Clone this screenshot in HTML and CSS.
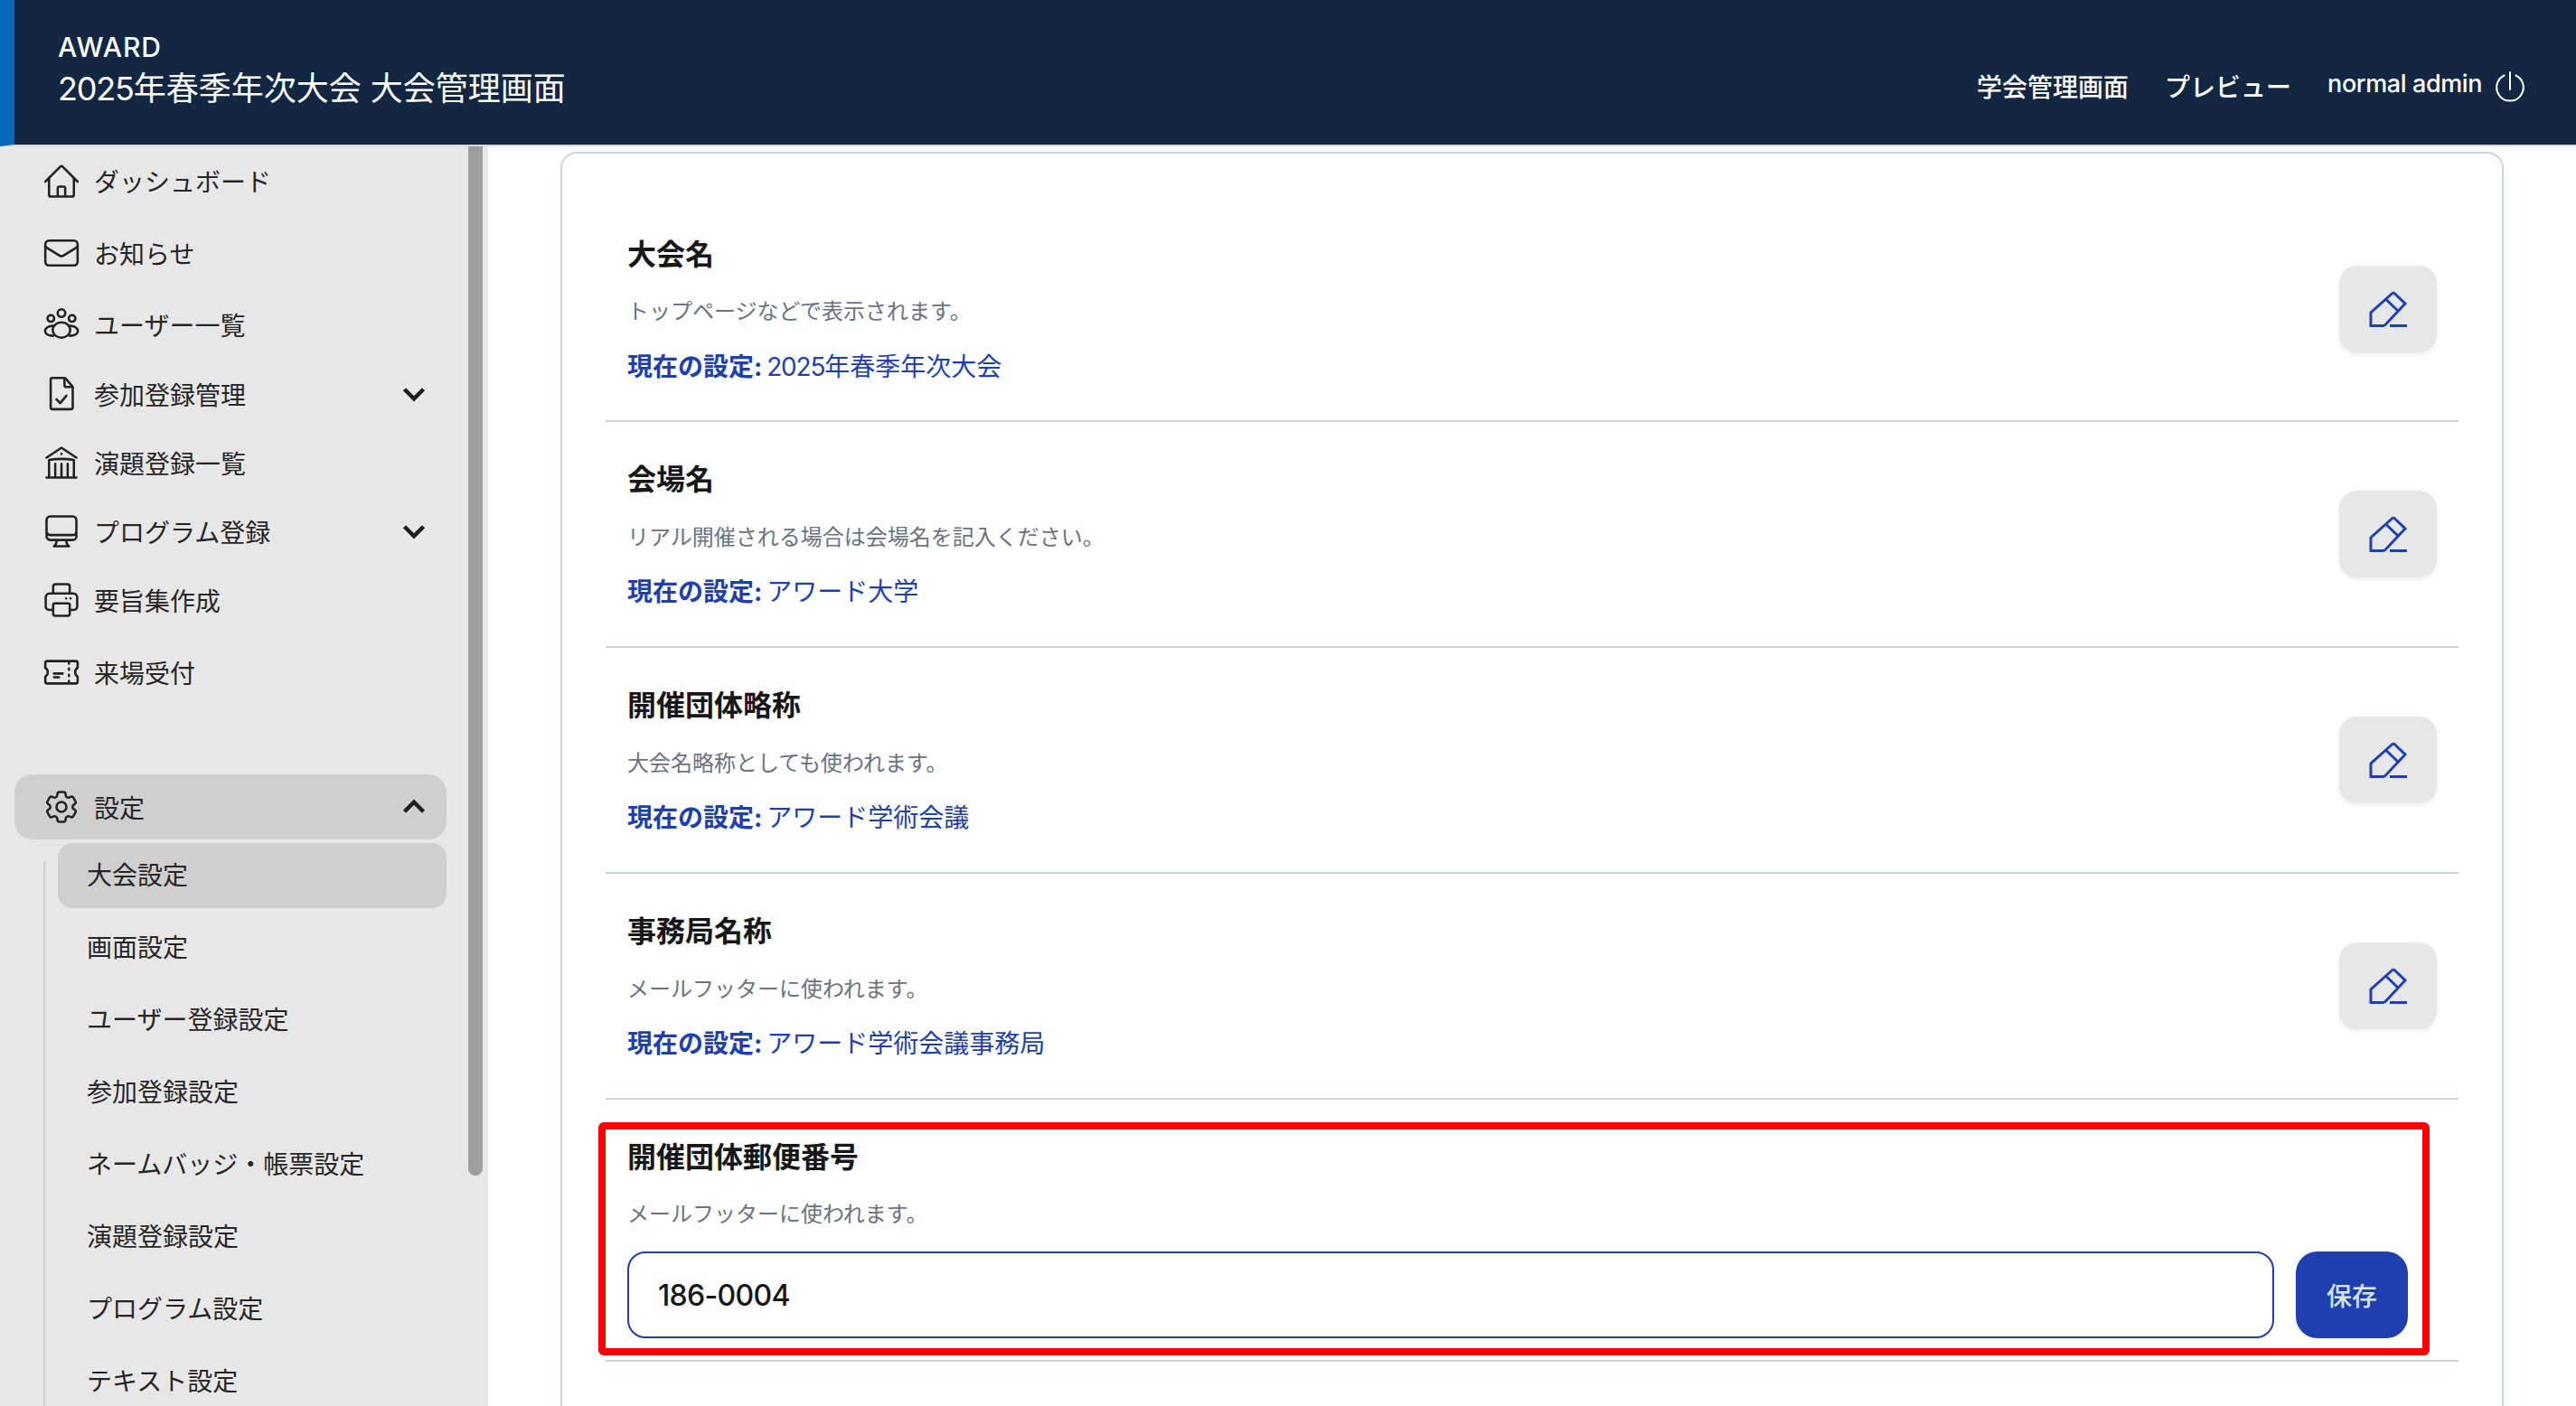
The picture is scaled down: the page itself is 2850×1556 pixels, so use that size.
FILE: index.html
```html
<!DOCTYPE html>
<html lang="ja">
<head>
<meta charset="utf-8">
<title>大会管理画面</title>
<link rel="stylesheet" href="styles.css">
</head>
<body>
<header class="topbar">
  <div class="brand">
    <div class="logo">AWARD</div>
    <div class="event-title"><span class="num">2025</span>年春季年次大会 大会管理画面</div>
  </div>
  <nav class="topnav">
    <a class="topnav-link">学会管理画面</a>
    <a class="topnav-link">プレビュー</a>
    <span class="user">normal admin</span>
    <svg class="power" viewBox="0 0 34 34" fill="none" stroke="currentColor" stroke-width="2" stroke-linecap="round"><path d="M17 1v19"/><path d="M10.500 4.500A14.800 14.800 0 1 0 23.500 4.500"/></svg>
  </nav>
</header>
<div class="layout">
  <aside class="sidebar">
    <div class="scroll-thumb"></div>
    <ul class="menu">
      <li class="item h-78 lift"><svg class="ico" viewBox="0 0 24 24"><path d="M2.250 12l8.954-8.955c.44-.439 1.152-.439 1.591 0L21.750 12M4.500 9.750v10.125c0 .621.504 1.125 1.125 1.125H9.750v-4.875c0-.621.504-1.125 1.125-1.125h2.250c.621 0 1.125.504 1.125 1.125V21h4.125c.621 0 1.125-.504 1.125-1.125V9.750M8.250 21h8.250"/></svg><span>ダッシュボード</span></li>
      <li class="item h-80"><svg class="ico" viewBox="0 0 24 24"><path d="M21.750 6.750v10.500a2.250 2.250 0 01-2.250 2.250h-15a2.250 2.250 0 01-2.250-2.250V6.750m19.500 0A2.250 2.250 0 0019.500 4.500h-15a2.250 2.250 0 00-2.250 2.250m19.500 0v.243a2.250 2.250 0 01-1.070 1.916l-7.500 4.615a2.250 2.250 0 01-2.360 0L3.320 8.910a2.250 2.250 0 01-1.070-1.916V6.750"/></svg><span>お知らせ</span></li>
      <li class="item h-78"><svg class="ico" viewBox="0 0 24 24"><circle cx="12" cy="5.200" r="2.300"/><circle cx="5.600" cy="8.400" r="2"/><circle cx="18.400" cy="8.400" r="2"/><path d="M12 10.800c-3 0-5.300 2-5.300 4.800 0 2.200 2.400 4.400 5.300 4.400s5.300-2.200 5.300-4.400c0-2.800-2.300-4.800-5.300-4.800z"/><path d="M6.800 12.800c-2.600 0-4.700 1.500-4.700 3.200s2 2.900 4.900 2.900M17.200 12.800c2.600 0 4.700 1.500 4.700 3.200s-2 2.900-4.900 2.900"/></svg><span>ユーザー一覧</span></li>
      <li class="item h-76"><svg class="ico" viewBox="0 0 24 24"><path d="M6.500 2.300h7c.4 0 .7.100 1 .4l4 4.600c.2.300.3.600.3.900v12c0 .600-.4 1-1 1H6.500c-.6 0-1-.4-1-1v-17c0-.6.400-1 1-.9z"/><path d="M13.800 2.500v4c0 .8.500 1.300 1.300 1.300h3.500M9 15.200l2.200 2.300 3.800-4.500"/></svg><span>参加登録管理</span><svg class="chev" viewBox="0 0 24 24"><path d="M5 8.500l7 7 7-7"/></svg></li>
      <li class="item h-76"><svg class="ico" viewBox="0 0 24 24"><path d="M12 21v-8.250M15.750 21v-8.250M8.250 21v-8.250M3 9l9-6 9 6m-1.500 12V10.332A48.360 48.360 0 0012 9.750c-2.551 0-5.056.2-7.500.582V21M3 21h18M12 6.750h.008v.008H12V6.750z"/></svg><span>演題登録一覧</span></li>
      <li class="item h-76"><svg class="ico" viewBox="0 0 24 24"><path d="M9 17.250v1.007a3 3 0 01-.879 2.122L7.500 21h9l-.621-.621A3 3 0 0115 18.257V17.250m6-12V15a2.250 2.250 0 01-2.250 2.250H5.250A2.250 2.250 0 013 15V5.250m18 0A2.250 2.250 0 0018.750 3H5.250A2.250 2.250 0 003 5.250m18 0V12a2.250 2.250 0 01-2.250 2.250H5.250A2.250 2.250 0 013 12V5.250"/></svg><span>プログラム登録</span><svg class="chev" viewBox="0 0 24 24"><path d="M5 8.500l7 7 7-7"/></svg></li>
      <li class="item h-76"><svg class="ico" viewBox="0 0 24 24"><path d="M7 8V4a1.500 1.500 0 0 1 1.500-1.500h7A1.500 1.500 0 0 1 17 4v4"/><path d="M7 18H4.500a2 2 0 0 1-2-2v-5.500A2.500 2.500 0 0 1 5 8h14a2.500 2.500 0 0 1 2.500 2.500V16a2 2 0 0 1-2 2H17"/><rect x="7" y="14" width="10" height="7.500" rx="1"/><path d="M17.500 11h.01M14.800 11h.01"/></svg><span>要旨集作成</span></li>
      <li class="item h-84"><svg class="ico" viewBox="0 0 24 24"><path d="M16.500 6v.750m0 3v.750m0 3v.750m0 3V18m-9-5.250h5.250M7.500 15h3M3.375 5.250c-.621 0-1.125.504-1.125 1.125v3.026a2.999 2.999 0 010 5.198v3.026c0 .621.504 1.125 1.125 1.125h17.250c.621 0 1.125-.504 1.125-1.125v-3.026a2.999 2.999 0 010-5.198V6.375c0-.621-.504-1.125-1.125-1.125H3.375z"/></svg><span>来場受付</span></li>
      <li class="item group-open"><svg class="ico" viewBox="0 0 24 24"><path d="M9.594 3.940c.09-.542.56-.94 1.110-.94h2.593c.55 0 1.020.398 1.110.94l.213 1.281c.063.374.313.686.645.870.074.04.147.083.22.127.324.196.72.257 1.075.124l1.217-.456a1.125 1.125 0 011.370.49l1.296 2.247a1.125 1.125 0 01-.26 1.431l-1.003.827c-.293.24-.438.613-.431.992a6.759 6.759 0 010 .255c-.007.378.138.75.43.99l1.005.828c.424.35.534.954.26 1.430l-1.298 2.247a1.125 1.125 0 01-1.369.491l-1.217-.456c-.355-.133-.75-.072-1.076.124a6.570 6.570 0 01-.22.128c-.331.183-.581.495-.644.869l-.213 1.280c-.09.543-.56.941-1.110.941h-2.594c-.55 0-1.020-.398-1.110-.94l-.213-1.281c-.062-.374-.312-.686-.644-.870a6.520 6.520 0 01-.22-.127c-.325-.196-.72-.257-1.076-.124l-1.217.456a1.125 1.125 0 01-1.369-.49l-1.297-2.247a1.125 1.125 0 01.26-1.431l1.004-.827c.292-.24.437-.613.43-.992a6.932 6.932 0 010-.255c.007-.378-.138-.75-.43-.99l-1.004-.828a1.125 1.125 0 01-.26-1.430l1.297-2.247a1.125 1.125 0 011.370-.491l1.216.456c.356.133.751.072 1.076-.124.072-.044.146-.087.22-.128.332-.183.582-.495.644-.869l.214-1.281z"/><path d="M15 12a3 3 0 11-6 0 3 3 0 016 0z"/></svg><span>設定</span><svg class="chev" viewBox="0 0 24 24"><path d="M5 15.500l7-7 7 7"/></svg></li>
    </ul>
    <ul class="submenu">
      <li class="subitem active">大会設定</li>
      <li class="subitem">画面設定</li>
      <li class="subitem">ユーザー登録設定</li>
      <li class="subitem">参加登録設定</li>
      <li class="subitem">ネームバッジ・帳票設定</li>
      <li class="subitem">演題登録設定</li>
      <li class="subitem">プログラム設定</li>
      <li class="subitem">テキスト設定</li>
    </ul>
  </aside>
  <main class="main">
    <section class="card">
      <div class="row first">
        <div class="row-text">
          <h2 class="row-title">大会名</h2>
          <p class="row-desc">トップページなどで表示されます。</p>
          <p class="row-current"><b>現在の設定:</b> <span class="num">2025</span>年春季年次大会</p>
        </div>
        <button class="edit"><svg class="edit-ico" viewBox="0 0 42 40"><path d="M17 38.500H2V24L27 1.500M27 1.500L40 14 17 38.500M18 8.500L32 22M23 38.500h19" /></svg></button>
      </div>
      <div class="row">
        <div class="row-text">
          <h2 class="row-title">会場名</h2>
          <p class="row-desc">リアル開催される場合は会場名を記入ください。</p>
          <p class="row-current"><b>現在の設定:</b> アワード大学</p>
        </div>
        <button class="edit"><svg class="edit-ico" viewBox="0 0 42 40"><path d="M17 38.500H2V24L27 1.500M27 1.500L40 14 17 38.500M18 8.500L32 22M23 38.500h19" /></svg></button>
      </div>
      <div class="row">
        <div class="row-text">
          <h2 class="row-title">開催団体略称</h2>
          <p class="row-desc">大会名略称としても使われます。</p>
          <p class="row-current"><b>現在の設定:</b> アワード学術会議</p>
        </div>
        <button class="edit"><svg class="edit-ico" viewBox="0 0 42 40"><path d="M17 38.500H2V24L27 1.500M27 1.500L40 14 17 38.500M18 8.500L32 22M23 38.500h19" /></svg></button>
      </div>
      <div class="row">
        <div class="row-text">
          <h2 class="row-title">事務局名称</h2>
          <p class="row-desc">メールフッターに使われます。</p>
          <p class="row-current"><b>現在の設定:</b> アワード学術会議事務局</p>
        </div>
        <button class="edit"><svg class="edit-ico" viewBox="0 0 42 40"><path d="M17 38.500H2V24L27 1.500M27 1.500L40 14 17 38.500M18 8.500L32 22M23 38.500h19" /></svg></button>
      </div>
      <div class="row editing">
        <h2 class="row-title">開催団体郵便番号</h2>
        <p class="row-desc">メールフッターに使われます。</p>
        <div class="edit-line">
          <input class="field" type="text" value="186-0004">
          <button class="save">保存</button>
        </div>
        <div class="highlight"></div>
      </div>
    </section>
  </main>
</div>
</body>
</html>
```

FILE: styles.css
```css
* { box-sizing: border-box; }
html, body { margin: 0; height: 100%; }
body {
  width: 2850px;
  height: 1556px;
  overflow: hidden;
  background: #fff;
  font-family: "Inter", "Noto Sans CJK JP", sans-serif;
  color: #1f1f1f;
  display: flex;
  flex-direction: column;
}
ul { list-style: none; margin: 0; padding: 0; }
h2, p { margin: 0; }
.num { letter-spacing: -1.200px; }

.topbar {
  flex: none;
  height: 162px;
  background: #132742;
  border-left: 16px solid #0568bd;
  border-bottom: 2px solid #d8d8d8;
  padding: 0 56px 0 48px;
  display: flex;
  justify-content: space-between;
  color: #fff;
}
.brand { padding-top: 36px; }
.logo { font-size: 30px; line-height: 32px; letter-spacing: 1px; font-weight: 500; }
.event-title { font-size: 36px; line-height: 50px; margin-top: 5px; font-weight: 400; }
.topnav { display: flex; align-items: center; padding-top: 29px; font-size: 28px; font-weight: 500; }
.topnav-link { margin-right: 40px; }
.user { font-size: 27px; letter-spacing: -.400px; margin-right: 14px; margin-top: -4px; }
.power { width: 34px; height: 34px; margin-top: 3px; }

.layout { flex: 1; min-height: 0; display: flex; }
.sidebar {
  position: relative;
  flex: none;
  width: 540px;
  background: #e7e7e7;
  overflow: hidden;
  font-size: 28px;
  color: #262626;
}
.scroll-thumb {
  position: absolute;
  left: 518px;
  top: 0;
  width: 16px;
  height: 1139px;
  background: #9e9e9e;
  border-radius: 0 0 8px 8px;
}
.menu { padding-left: 16px; width: 494px; }
.item { display: flex; align-items: center; gap: 14px; padding: 0 18px 0 30px; }
.item span { flex: 1; }
.lift span { padding-bottom: 2px; }
.h-76 { height: 76px; }
.h-78 { height: 78px; }
.h-80 { height: 80px; }
.h-84 { height: 84px; }
.group-open { height: 72px; margin-top: 71px; background: #cfcfcf; border-radius: 20px; }
.ico {
  flex: none;
  width: 44px;
  height: 44px;
  fill: none;
  stroke: #222;
  stroke-width: 1.4;
  stroke-linecap: round;
  stroke-linejoin: round;
}
.chev {
  flex: none;
  width: 36px;
  height: 36px;
  fill: none;
  stroke: #1f1f1f;
  stroke-width: 3;
}
.submenu { position: relative; margin: 4px 0 0 48px; padding-left: 16px; width: 446px; }
.submenu::before {
  content: "";
  position: absolute;
  left: 0;
  top: 20px;
  bottom: 0;
  width: 2px;
  background: #d0d0d0;
}
.subitem { height: 80px; display: flex; align-items: center; padding: 0 0 5px 32px; }
.subitem.active { height: 72px; margin-bottom: 4px; background: #cfcfcf; border-radius: 16px; }

.main { flex: 1; min-width: 0; overflow: hidden; padding: 6px 0 0 80px; }
.card {
  width: 2150px;
  min-height: 1600px;
  background: #fff;
  border: 2px solid #cbd5e1;
  border-radius: 18px;
  padding: 0 48px;
}
.row {
  position: relative;
  height: 250px;
  border-bottom: 2px solid #cbd5e1;
  padding: 40px 24px 0;
  display: flex;
  justify-content: space-between;
  align-items: flex-start;
}
.row.first { height: 297px; padding-top: 88px; }
.row-title { font-size: 32px; line-height: 48px; font-weight: 700; color: #171717; }
.row-desc { font-size: 24px; line-height: 36px; margin-top: 22px; color: #6b7280; }
.row-current { font-size: 28px; line-height: 42px; margin-top: 21px; color: #1e40af; word-spacing: -3px; }
.first .row-desc { margin-top: 21px; }
.first .row-current { margin-top: 22px; }
.row-current b { font-weight: 700; }
.edit {
  width: 108px;
  height: 96px;
  margin-top: 36px;
  border: 0;
  padding: 0;
  background: #e7e7e7;
  border-radius: 20px;
  box-shadow: 0 2px 6px rgba(0,0,0,.08);
  display: flex;
  align-items: center;
  justify-content: center;
}
.edit-ico { width: 42px; height: 40px; fill: none; stroke: #1e40af; stroke-width: 3; }

.row.editing { display: block; height: 290px; }
.editing .row-desc { margin-top: 21px; }
.edit-line { display: flex; gap: 24px; margin-top: 23px; padding-right: 32px; }
.field {
  flex: 1;
  min-width: 0;
  height: 96px;
  border: 2px solid #1e40af;
  border-radius: 20px;
  padding: 0 32px;
  font: 500 32px "Inter", "Noto Sans CJK JP", sans-serif;
  letter-spacing: -.700px;
  color: #171717;
  outline: none;
}
.save {
  flex: none;
  width: 124px;
  height: 96px;
  border: 0;
  border-radius: 24px;
  background: #1e40af;
  color: #dbe4f8;
  font: 500 28px "Inter", "Noto Sans CJK JP", sans-serif;
}
.highlight {
  position: absolute;
  left: -8px;
  top: 25px;
  width: 2026px;
  height: 258px;
  border: 8px solid #ff0000;
  border-radius: 6px;
  pointer-events: none;
}
```
